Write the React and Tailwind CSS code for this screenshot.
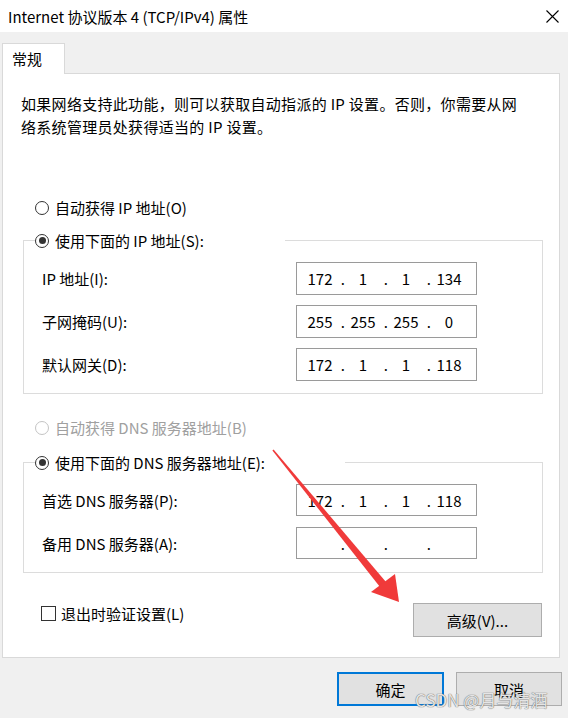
import React from "react";

const font = "font-['Noto_Sans_CJK_SC','Noto_Sans',sans-serif]";

const Radio = ({ checked, disabled, label }) => (
  <div className="flex items-center h-[23px]">
    <span
      className={`w-[14px] h-[14px] rounded-full border bg-white flex items-center justify-center ${
        disabled ? "border-[#c4c4c4]" : "border-[#333333]"
      }`}
    >
      {checked && <span className="w-[7px] h-[7px] rounded-full bg-[#333333]" />}
    </span>
    <span className={`ml-[6px] ${disabled ? "text-[#a0a0a0]" : "text-black"}`}>{label}</span>
  </div>
);

const IpField = ({ parts }) => (
  <div className="w-[181px] h-full border border-[#9a9a9a] bg-white flex items-center pl-[5px]">
    {parts.map((p, i) => (
      <React.Fragment key={i}>
        <span className="w-[36px] text-center">{p}</span>
        {i < 3 && <span className="w-[7px] text-right">.</span>}
      </React.Fragment>
    ))}
  </div>
);

const Row = ({ label, parts, h }) => (
  <div className={`flex items-center ${h}`}>
    <span className="w-[272px] pl-[18px]">{label}</span>
    <IpField parts={parts} />
  </div>
);

export default function App() {
  return (
    <div className={`relative w-[568px] h-[718px] bg-[#f0f0f0] overflow-hidden text-[15px] leading-[23px] text-black ${font}`}>
      {/* title bar */}
      <div className="h-[32px] bg-white flex items-center justify-between pl-[8px] pr-[9px]">
        <span>Internet 协议版本 4 (TCP/IPv4) 属性</span>
        <svg width="13" height="13" viewBox="0 0 13 13" className="text-black">
          <path d="M0.5 0.5 L12.5 12.5 M12.5 0.5 L0.5 12.5" stroke="currentColor" strokeWidth="1.1" />
        </svg>
      </div>

      {/* tab */}
      <div className="mt-[11px] ml-[2px] relative z-10 -mb-px w-[63px] h-[31px] bg-white border border-b-0 border-[#d9d9d9] pl-[9px] pt-[3px]">
        常规
      </div>

      {/* panel */}
      <div className="ml-[2px] w-[558px] h-[585px] bg-white border border-[#d9d9d9] flex flex-col">
        <div className="mt-[18px] ml-[18px] whitespace-nowrap tracking-[0.3px]">
          <div>如果网络支持此功能，则可以获取自动指派的 IP 设置。否则，你需要从网</div>
          <div>络系统管理员处获得适当的 IP 设置。</div>
        </div>

        <div className="mt-[58px] ml-[32px]">
          <Radio label="自动获得 IP 地址(O)" />
        </div>

        <fieldset className="mt-[10px] ml-[20px] w-[520px] border border-[#dcdcdc] pb-[12px]">
          <legend className="ml-[11px] w-[250px] h-[23px]">
            <Radio checked label="使用下面的 IP 地址(S):" />
          </legend>
          <div className="mt-[10px] flex flex-col gap-[10px]">
            <Row h="h-[33px]" label="IP 地址(I):" parts={["172", "1", "1", "134"]} />
            <Row h="h-[33px]" label="子网掩码(U):" parts={["255", "255", "255", "0"]} />
            <Row h="h-[33px]" label="默认网关(D):" parts={["172", "1", "1", "118"]} />
          </div>
        </fieldset>

        <div className="mt-[22px] ml-[32px]">
          <Radio disabled label="自动获得 DNS 服务器地址(B)" />
        </div>

        <fieldset className="mt-[12px] ml-[20px] w-[520px] border border-[#dcdcdc] pb-[13px]">
          <legend className="ml-[11px] w-[310px] h-[23px]">
            <Radio checked label="使用下面的 DNS 服务器地址(E):" />
          </legend>
          <div className="mt-[10px] flex flex-col gap-[11px]">
            <Row h="h-[32px]" label="首选 DNS 服务器(P):" parts={["172", "1", "1", "118"]} />
            <Row h="h-[32px]" label="备用 DNS 服务器(A):" parts={["", "", "", ""]} />
          </div>
        </fieldset>

        <div className="mt-[29px] ml-[38px] mr-[17px] flex items-start justify-between">
          <div className="flex items-center h-[23px]">
            <span className="w-[15px] h-[15px] border border-[#333333] bg-white" />
            <span className="ml-[5px]">退出时验证设置(L)</span>
          </div>
          <button className="w-[129px] h-[34px] mt-[1px] bg-[#e1e1e1] border border-[#adadad] flex items-center justify-center">
            高级(V)...
          </button>
        </div>
      </div>

      {/* footer buttons */}
      <div className="mt-[14px] mr-[6px] flex justify-end gap-[12px]">
        <button className="w-[107px] h-[34px] bg-[#e1e1e1] border-2 border-[#0078d7] flex items-center justify-center">
          确定
        </button>
        <button className="w-[106px] h-[34px] bg-[#e1e1e1] border border-[#adadad] flex items-center justify-center">
          取消
        </button>
      </div>

      {/* annotation arrow */}
      <svg className="absolute inset-0 pointer-events-none" width="568" height="718" viewBox="0 0 568 718">
        <polygon points="272.4,450.5 273.6,449.5 386,582 380,587" fill="#f03a3a" />
        <polygon points="371,592 395,574 399,602" fill="#f03a3a" />
      </svg>

      {/* watermark */}
      <div className="absolute left-[415px] top-[688px] text-[17px] leading-[24px] text-[#f6f6f6]/90 [text-shadow:0_0_1px_#6b6b6b,0_0_1px_#6b6b6b] pointer-events-none">
        CSDN @月与清酒
      </div>
    </div>
  );
}
